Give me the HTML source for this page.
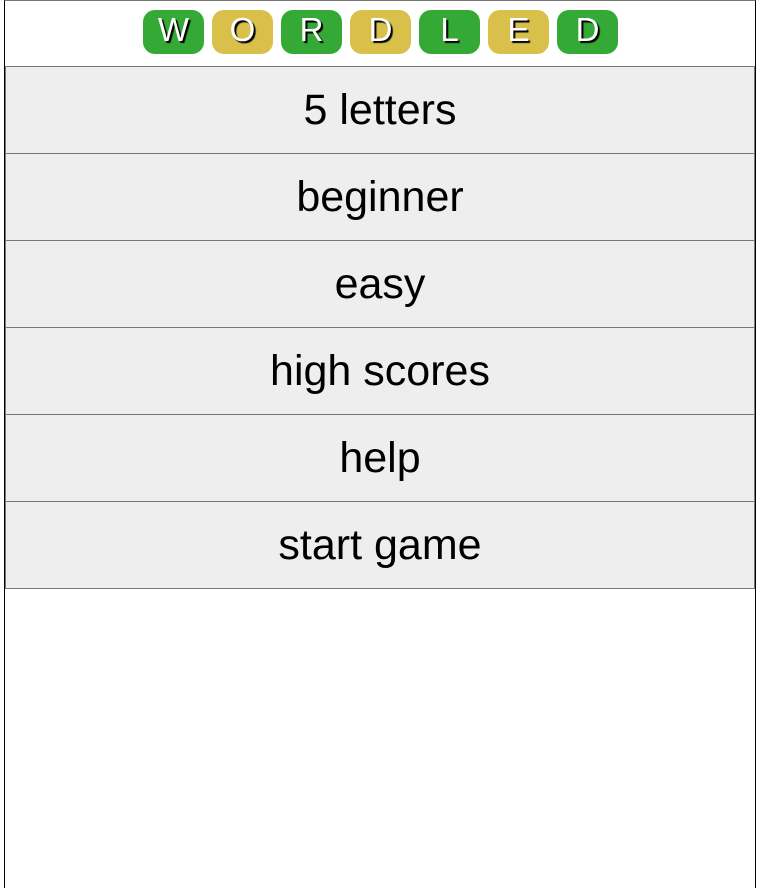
<!DOCTYPE html>
<html><head><style>
html,body{margin:0;padding:0;background:#fff;}
#frame{position:absolute;left:4px;top:0;width:750px;height:887px;border-left:1px solid #000;border-right:1px solid #000;border-top:1px solid #777;box-sizing:content-box;}
.tile{position:absolute;top:10px;width:61px;height:44px;border-radius:12px;color:#fff;font:33px "Liberation Sans",sans-serif;text-align:center;line-height:40px;text-shadow:2px 2px 1px #000;}
.g{background:#35a935}.y{background:#d9c04a}
.btn{position:absolute;left:5px;width:748px;height:86px;background:#eee;border:1px solid #777;font:43px "Liberation Sans",sans-serif;text-align:center;line-height:86px;color:#000;}
</style></head><body>
<div id="frame"></div>
<div class="tile g" style="left:143px">W</div>
<div class="tile y" style="left:212px">O</div>
<div class="tile g" style="left:281px">R</div>
<div class="tile y" style="left:350px">D</div>
<div class="tile g" style="left:419px">L</div>
<div class="tile y" style="left:488px">E</div>
<div class="tile g" style="left:557px">D</div>
<div class="btn" style="top:66px">5 letters</div>
<div class="btn" style="top:153px">beginner</div>
<div class="btn" style="top:240px">easy</div>
<div class="btn" style="top:327px">high scores</div>
<div class="btn" style="top:414px">help</div>
<div class="btn" style="top:501px">start game</div>
</body></html>
